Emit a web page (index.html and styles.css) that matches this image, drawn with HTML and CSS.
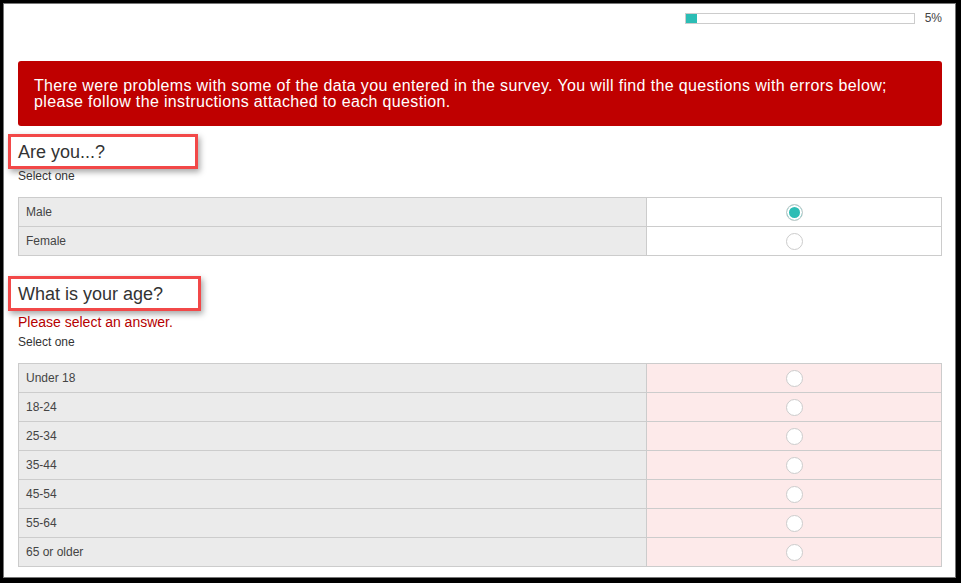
FILE: index.html
```html
<!DOCTYPE html>
<html lang="en">
<head>
<meta charset="UTF-8" />
<meta name="viewport" content="width=device-width, initial-scale=1.0" />
<title>Survey</title>
<link rel="stylesheet" href="styles.css">
</head>
<body>
<div class="frame">

  <div class="progress">
    <div class="bar"><div class="fill" style="width: 5%"></div></div>
    <span class="pct">5%</span>
  </div>

  <div class="alert">
    There were problems with some of the data you entered in the survey. You will find the questions with errors below;<br>
    please follow the instructions attached to each question.
  </div>

  <div class="question">
    <div class="q-title">Are you...?</div>
    <div class="hint">Select one</div>
    <table class="choices">
      <tr><td class="label">Male</td><td class="opt"><span class="radio checked"></span></td></tr>
      <tr><td class="label">Female</td><td class="opt"><span class="radio"></span></td></tr>
    </table>
  </div>

  <div class="question">
    <div class="q-title">What is your age?</div>
    <div class="error">Please select an answer.</div>
    <div class="hint">Select one</div>
    <table class="choices has-error">
      <tr><td class="label">Under 18</td><td class="opt"><span class="radio"></span></td></tr>
      <tr><td class="label">18-24</td><td class="opt"><span class="radio"></span></td></tr>
      <tr><td class="label">25-34</td><td class="opt"><span class="radio"></span></td></tr>
      <tr><td class="label">35-44</td><td class="opt"><span class="radio"></span></td></tr>
      <tr><td class="label">45-54</td><td class="opt"><span class="radio"></span></td></tr>
      <tr><td class="label">55-64</td><td class="opt"><span class="radio"></span></td></tr>
      <tr><td class="label">65 or older</td><td class="opt"><span class="radio"></span></td></tr>
    </table>
  </div>

</div>
</body>
</html>
```

FILE: styles.css
```css
html, body { margin: 0; background: #000; font-family: "Liberation Sans", Arial, sans-serif; color: #333; }
.frame { margin: 3px 5px 5px 3px; height: 573px; background: #fff; border: 1px solid #777; padding: 0 13px 0 14px; overflow: hidden; }

.progress { display: flex; justify-content: flex-end; align-items: center; gap: 10px; padding-top: 9px; height: 11px; }
.bar { width: 228px; height: 9px; border: 1px solid #ccc; background: #fff; }
.fill { height: 100%; background: #2bbdb5; }
.pct { font-size: 12px; color: #444; line-height: 11px; }

.alert { margin-top: 37px; background: #bf0000; color: #fff; border-radius: 3px; font-size: 16px; line-height: 16px; letter-spacing: 0.35px; padding: 17px 16px 16px; }

.question { margin-top: 8px; }
.question + .question { margin-top: 20px; }
.q-title { display: inline-block; margin-left: -10px; width: 170px; padding: 3px 7px 1px; border: 3px solid #f24848; box-shadow: 2px 3px 6px rgba(0,0,0,.35); font-size: 18px; line-height: 25px; color: #333; }
.question + .question .q-title { width: 173px; }
.hint { font-size: 12px; line-height: 14px; margin-top: 0; }
.error { font-size: 14px; line-height: 16px; color: #b50000; margin-top: 3px; }
.error + .hint { margin-top: 5px; }

.choices { width: 100%; border-collapse: collapse; margin-top: 14px; }
.choices td { border: 1px solid #ccc; height: 28px; padding: 0; font-size: 12px; color: #444; }
.choices .label { width: 620px; padding-left: 7px; background: #ebebeb; }
.choices .opt { text-align: center; background: #fff; }
.has-error .opt { background: #fdeaea; }

.radio { display: inline-block; width: 17px; height: 17px; border: 1px solid #ccc; border-radius: 50%; background: #fff; box-sizing: border-box; vertical-align: middle; }
.radio.checked { background: #2bbdb5; box-shadow: inset 0 0 0 2px #fff; }
```
